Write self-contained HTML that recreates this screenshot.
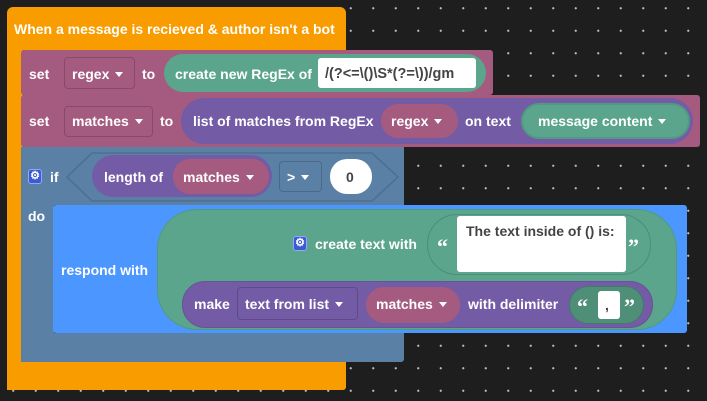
<!DOCTYPE html>
<html><head><style>
html,body{margin:0;padding:0}
body{width:707px;height:401px;overflow:hidden;position:relative;background-color:#1e1e1e;
background-image:radial-gradient(circle,#bbb 0.9px,transparent 1.3px);
background-size:22.5px 22.5px;background-position:2px -3px;
font-family:"Liberation Sans",sans-serif;font-weight:bold;font-size:14px;color:#fff}
div{position:absolute;box-sizing:border-box}
.t{white-space:nowrap;line-height:16px}
.dd{border:1px solid rgba(0,0,0,.18);border-radius:4px}
.tri{display:inline-block;width:0;height:0;border-left:4px solid transparent;border-right:4px solid transparent;border-top:5px solid #fff;vertical-align:2px;margin-left:6px}
.gear{width:14px;height:15px;background:#3d5bd1;border:1px solid #8fa8ff;border-radius:3px;color:#fff;font-size:11px;line-height:13px;text-align:center}
.q{font-family:"Liberation Serif",serif;font-size:22px;line-height:22px}
</style></head><body>
<div style="left:7px;top:7px;width:339px;height:43px;background:#f89c00;border-radius:6px 6px 0 0"></div>
<div style="left:7px;top:40px;width:16px;height:350px;background:#f89c00"></div>
<div style="left:7px;top:362px;width:339px;height:28px;background:#f89c00;border-radius:0 0 3px 3px"></div>
<div class="t" style="left:14px;top:21px">When a message is recieved &amp; author isn't a bot</div>

<div style="left:21px;top:50px;width:472px;height:45px;background:#a55b80;border-radius:3px"></div>
<div class="t" style="left:29px;top:66px">set</div>
<div class="dd" style="left:64px;top:57px;width:71px;height:32px"></div>
<div class="t" style="left:72px;top:66px">regex<span class="tri"></span></div>
<div class="t" style="left:142px;top:66px">to</div>
<div style="left:164px;top:54px;width:322px;height:38px;background:#5ba58c;border-radius:19px"></div>
<div class="t" style="left:175px;top:66px">create new RegEx of</div>
<div style="left:318px;top:58px;width:158px;height:30px;background:#fff;border-radius:3px"></div>
<div class="t" style="left:325px;top:66px;color:#444;font-size:14.5px">/(?&lt;=\()\S*(?=\))/gm</div>

<div style="left:21px;top:95px;width:679px;height:52px;background:#a55b80;border-radius:3px"></div>
<div class="t" style="left:29px;top:113px">set</div>
<div class="dd" style="left:64px;top:106px;width:89px;height:31px"></div>
<div class="t" style="left:72px;top:113px">matches<span class="tri"></span></div>
<div class="t" style="left:160px;top:113px">to</div>
<div style="left:181px;top:98px;width:512px;height:46px;background:#745ba5;border-radius:23px"></div>
<div class="t" style="left:193px;top:113px">list of matches from RegEx</div>
<div style="left:381px;top:104px;width:77px;height:34px;background:#a55b80;border-radius:17px"></div>
<div class="t" style="left:391px;top:113px">regex<span class="tri"></span></div>
<div class="t" style="left:465px;top:113px">on text</div>
<div style="left:521px;top:103px;width:169px;height:36px;background:#5ba58c;border-radius:18px;border:2px solid #4f9a80"></div>
<div class="t" style="left:538px;top:113px">message content<span class="tri"></span></div>

<div style="left:21px;top:147px;width:383px;height:58px;background:#5b80a5"></div>
<div style="left:21px;top:147px;width:33px;height:215px;background:#5b80a5"></div>
<div style="left:21px;top:333px;width:383px;height:29px;background:#5b80a5;border-radius:0 0 3px 3px"></div>
<div class="gear" style="left:28px;top:169px">⚙</div>
<div class="t" style="left:50px;top:169px">if</div>
<svg style="position:absolute;left:66px;top:152px" width="333" height="50"><polygon points="26,1 306,1 332,25 306,49 26,49 1,25" fill="#5b80a5" stroke="#4c6f91" stroke-width="1.5"/></svg>
<div style="left:92px;top:155px;width:180px;height:42px;background:#745ba5;border-radius:21px"></div>
<div class="t" style="left:104px;top:169px">length of</div>
<div style="left:173px;top:159px;width:96px;height:35px;background:#a55b80;border-radius:17px"></div>
<div class="t" style="left:183px;top:169px">matches<span class="tri"></span></div>
<div class="dd" style="left:279px;top:161px;width:43px;height:31px"></div>
<div class="t" style="left:287px;top:169px">&gt;<span class="tri"></span></div>
<div style="left:330px;top:159px;width:42px;height:35px;background:#fff;border-radius:17px"></div>
<div class="t" style="left:346px;top:169px;color:#444">0</div>
<div class="t" style="left:28px;top:208px">do</div>

<div style="left:53px;top:205px;width:634px;height:128px;background:#4c97ff;border-radius:3px"></div>
<div class="t" style="left:61px;top:262px">respond with</div>
<div style="left:157px;top:209px;width:520px;height:121px;background:#5ba58c;border-radius:40px;border:1px solid #4f9a80"></div>
<div class="gear" style="left:293px;top:236px">⚙</div>
<div class="t" style="left:315px;top:236px">create text with</div>
<div style="left:427px;top:214px;width:224px;height:61px;background:#5ba58c;border:1px solid #4a8f78;border-radius:30px"></div>
<div class="t q" style="left:437px;top:236px">“</div>
<div class="t q" style="left:628px;top:236px">”</div>
<div style="left:457px;top:216px;width:169px;height:56px;background:#fff;border-radius:3px"></div>
<div class="t" style="left:466px;top:223px;color:#444">The text inside of () is:</div>
<div style="left:182px;top:281px;width:471px;height:47px;background:#745ba5;border-radius:23px;border:1px solid #6a529a"></div>
<div class="t" style="left:194px;top:296px">make</div>
<div class="dd" style="left:237px;top:287px;width:121px;height:33px"></div>
<div class="t" style="left:245px;top:296px">text from list<span class="tri"></span></div>
<div style="left:366px;top:287px;width:94px;height:36px;background:#a55b80;border-radius:18px"></div>
<div class="t" style="left:376px;top:296px">matches<span class="tri"></span></div>
<div class="t" style="left:468px;top:296px">with delimiter</div>
<div style="left:569px;top:286px;width:75px;height:38px;border-radius:19px;border:1px solid #3f7d68;background:#4f8f78"></div>
<div class="t q" style="left:577px;top:296px">“</div>
<div class="t q" style="left:624px;top:296px">”</div>
<div style="left:598px;top:291px;width:22px;height:28px;background:#fff;border-radius:3px"></div>
<div class="t" style="left:605px;top:297px;color:#444">,</div>
</body></html>
